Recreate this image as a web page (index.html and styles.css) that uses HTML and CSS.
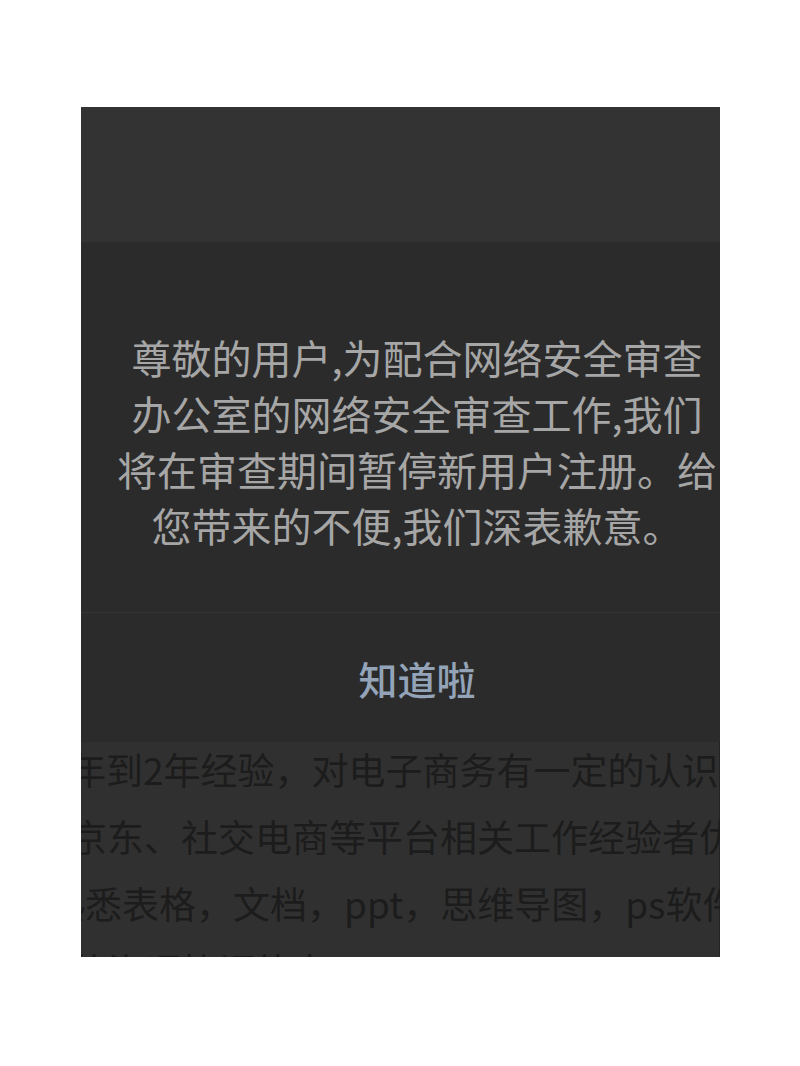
FILE: index.html
```html
<!DOCTYPE html>
<html lang="zh-CN">
<head>
<meta charset="utf-8">
<title>提示</title>
<link rel="stylesheet" href="styles.css">
</head>
<body>
<div class="frame">
  <div class="topbar"></div>
  <div class="dialog">
    <div class="msg">
      <span class="line">尊敬的用户,为配合网络安全审查</span>
      <span class="line">办公室的网络安全审查工作,我们</span>
      <span class="line">将在审查期间暂停新用户注册。给</span>
      <span class="line">您带来的不便,我们深表歉意。</span>
    </div>
    <div class="btn">知道啦</div>
  </div>
  <div class="behind">
    <span class="bline l1">年到2年经验，对电子商务有一定的认识；</span>
    <span class="bline l2">京东、社交电商等平台相关工作经验者优先</span>
    <span class="bline l3">熟悉表格，文档，ppt，思维导图，ps软件</span>
    <span class="bline l4">的沟通协调能力</span>
  </div>
</div>
</body>
</html>
```

FILE: styles.css
```css
html, body {
  margin: 0;
  padding: 0;
  background: #ffffff;
}

body {
  font-family: "Noto Sans CJK SC", "Noto Sans", sans-serif;
}

.frame {
  margin-top: 107px;
  margin-left: 81px;
  width: 639px;
  height: 850px;
  overflow: hidden;
  background: #303030;
  display: flex;
  flex-direction: column;
  box-shadow: inset 0 1px 0 #262626, inset -1px 0 0 #242424;
}

.topbar {
  height: 135px;
  flex: none;
  background: #333333;
}

.dialog {
  flex: none;
  height: 500px;
  background: #2b2b2b;
  display: flex;
  flex-direction: column;
}

.msg {
  height: 371px;
  box-sizing: border-box;
  padding: 87px 3px 0 36px;
  border-bottom: 1px solid #363636;
  color: #a6a6a6;
  font-size: 40px;
  line-height: 56px;
  text-align: center;
}

.line {
  display: block;
  white-space: nowrap;
}

.btn {
  flex: 1;
  display: flex;
  align-items: center;
  justify-content: center;
  padding-left: 33px;
  color: #93a3b8;
  font-size: 39px;
  font-weight: 500;
}

.behind {
  flex: 1;
  margin-top: -6px;
  color: #1c1c1c;
  font-size: 37px;
  line-height: 67px;
}

.bline {
  display: block;
  white-space: nowrap;
}

.l1 { margin-left: -12px; }
.l2 { margin-left: -11px; }
.l3 { margin-left: -33px; }
.l4 { margin-left: -10px; }
```
